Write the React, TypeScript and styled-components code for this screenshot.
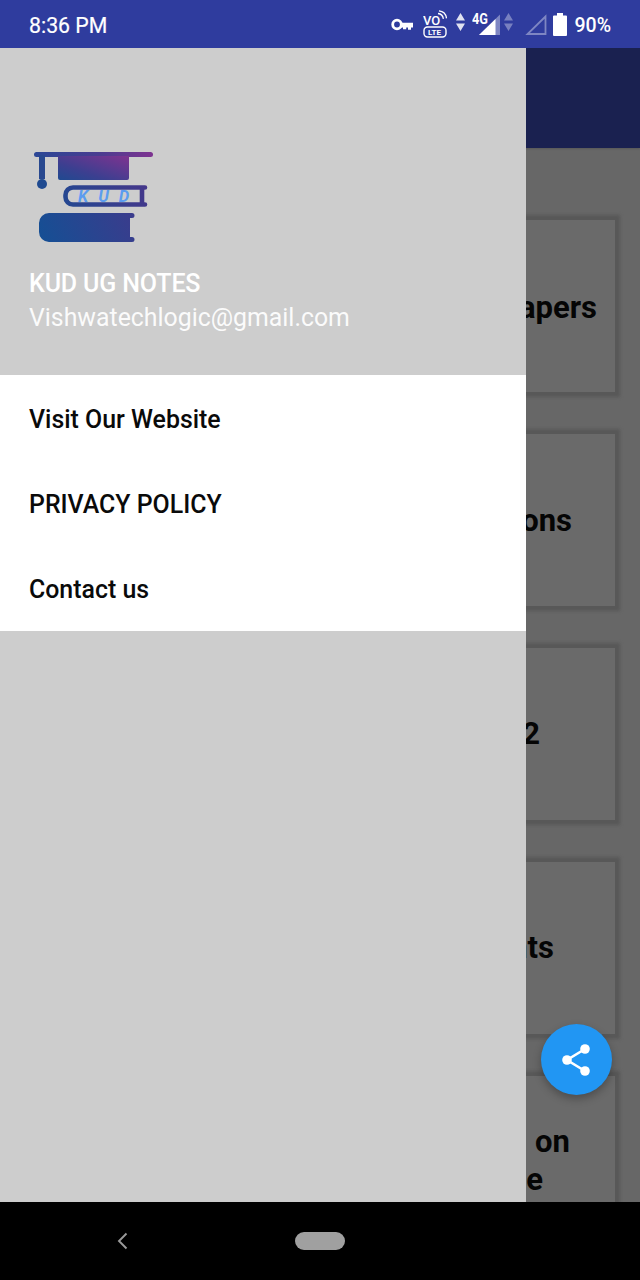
import React from "react";
import styled, { createGlobalStyle } from "styled-components";

const Global = createGlobalStyle`
  html, body { margin: 0; padding: 0; background: #000; }
  body { font-family: Roboto, "Liberation Sans", sans-serif; }
`;

const Screen = styled.div`
  width: 640px;
  height: 1280px;
  display: flex;
  flex-direction: column;
  overflow: hidden;
`;

const StatusBar = styled.header`
  height: 48px;
  flex: none;
  background: #2f3c9e;
  color: #fff;
  display: flex;
  align-items: center;
  padding: 0 29px;
  font-size: 20px;
  font-weight: 500;
`;

const Time = styled.span`
  flex: 1;
  font-size: 21.3px;
  font-weight: 400;
  padding-top: 2px;
  -webkit-text-stroke: 0.2px #fff;
`;

const StatusIcons = styled.div`
  display: flex;
  align-items: center;
`;

const StatusIcon = styled.svg<{ $gap: number; $lift?: number }>`
  display: block;
  margin-right: ${(p) => p.$gap}px;
  margin-bottom: ${(p) => p.$lift ?? 0}px;
  flex: none;
`;

const Battery = styled.span`
  font-size: 19.5px;
  line-height: 1;
  padding-top: 3px;
`;

const Body = styled.main`
  flex: 1;
  position: relative;
  display: flex;
  flex-direction: column;
  background: #676767;
  overflow: hidden;
`;

const AppBar = styled.div`
  height: 100px;
  flex: none;
  background: #1a2150;
  box-shadow: 0 1px 2px rgba(0, 0, 0, 0.15);
`;

const CardList = styled.div`
  display: flex;
  flex-direction: column;
  gap: 42px;
  padding: 72px 25px 0 25px;
`;

const Card = styled.section<{ $down?: number; $up?: number }>`
  height: 172px;
  flex: none;
  box-sizing: border-box;
  padding-top: ${(p) => p.$down ?? 0}px;
  padding-bottom: ${(p) => p.$up ?? 0}px;
  background: #6a6a6a;
  box-shadow: 0 0 3px 5px #585858;
  display: flex;
  flex-direction: column;
  justify-content: center;
  align-items: flex-end;
  font-size: 31px;
  font-weight: 700;
  word-spacing: 1px;
  color: #050505;
`;

const CardLine = styled.div<{ $end: number }>`
  margin-right: ${(p) => p.$end}px;
  white-space: nowrap;
  line-height: 38px;
`;

const Drawer = styled.aside`
  position: absolute;
  left: 0;
  top: 0;
  bottom: 0;
  width: 526px;
  background: #cdcdcd;
  display: flex;
  flex-direction: column;
`;

const DrawerHeader = styled.div`
  height: 327px;
  flex: none;
  box-sizing: border-box;
  padding: 104px 0 0 29px;
  color: #fff;
`;

const Logo = styled.svg`
  display: block;
  margin: 0 0 23px 5px;
`;

const HeaderTitle = styled.div`
  font-size: 25px;
  font-weight: 500;
  line-height: 34px;
  letter-spacing: -0.15px;
`;

const HeaderMail = styled.div`
  font-size: 24.85px;
  line-height: 34px;
  font-weight: 400;
  opacity: 0.92;
`;

const Menu = styled.nav`
  background: #fff;
  height: 256px;
  flex: none;
  display: grid;
  grid-template-rows: repeat(3, 1fr);
`;

const MenuItem = styled.div`
  display: flex;
  align-items: center;
  padding: 3px 0 0 29px;
  font-size: 24.9px;
  font-weight: 500;
  color: #0a0a0a;
`;

const Fab = styled.button`
  position: absolute;
  left: 540.5px;
  top: 976px;
  width: 71px;
  height: 71px;
  padding: 0;
  border: 0;
  border-radius: 50%;
  background: #2196f3;
  box-shadow: 0 4px 8px rgba(0, 0, 0, 0.28);
  display: flex;
  align-items: center;
  justify-content: center;
`;

const NavBar = styled.footer`
  height: 78px;
  flex: none;
  background: #000;
  display: flex;
  align-items: center;
  padding-left: 117px;
`;

const BackIcon = styled.svg`
  display: block;
  margin-right: 167px;
`;

const HomePill = styled.div`
  width: 50px;
  height: 18px;
  border-radius: 9px;
  background: #a0a0a0;
`;

const MiniText = styled.text`
  font-family: Roboto, "Liberation Sans", sans-serif;
  fill: #fff;
`;

const LogoLetters = styled.text`
  font-family: Roboto, "Liberation Sans", sans-serif;
  font-style: italic;
  font-weight: 700;
  font-size: 16.5px;
  letter-spacing: 10px;
  fill: #5b9cf0;
`;

const KeyIcon = () => (
  <StatusIcon $gap={10} width="22" height="13" viewBox="0 0 22 13" fill="none">
    <circle cx="6" cy="6.500" r="4.300" stroke="#fff" strokeWidth="2.800" />
    <path d="M10 4.800h12v4.600h-2v2.400h-3V9.400h-1.800v1.800H12V9.400h-2z" fill="#fff" />
  </StatusIcon>
);

const VolteIcon = () => (
  <StatusIcon $gap={9} width="24" height="28" viewBox="0 0 24 28" fill="none">
    <MiniText x="0" y="15" fontSize="13" fontWeight="500">VO</MiniText>
    <path d="M15 3.500c2.800.3 5 2.500 5.400 5.400M16 .8c4.200.4 7 3.400 7.500 7.600" stroke="#fff" strokeWidth="1.300" />
    <rect x="1" y="17" width="22" height="10" rx="3.500" stroke="#fff" strokeWidth="1.400" />
    <MiniText x="5" y="25" fontSize="8" fontWeight="700">LTE</MiniText>
  </StatusIcon>
);

const ArrowsIcon = ({ dim, gap }: { dim?: boolean; gap: number }) => (
  <StatusIcon $gap={gap} $lift={4} width="9" height="18" viewBox="0 0 9 18" opacity={dim ? 0.35 : 0.85}>
    <path d="M4.500 0L9 7.500H0zM0 10.500h9L4.500 18z" fill="#fff" />
  </StatusIcon>
);

const SignalIcon = () => (
  <StatusIcon $gap={2} $lift={6} width="30" height="30" viewBox="0 0 30 30">
    <MiniText x="0" y="18" fontSize="15" fontWeight="700" textLength="16" lengthAdjust="spacingAndGlyphs">4G</MiniText>
    <path d="M28 8.500V29H7z" fill="#fff" fillOpacity="0.38" />
    <path d="M23.500 13V29H7z" fill="#fff" />
  </StatusIcon>
);

const EmptySignalIcon = () => (
  <StatusIcon $gap={6} width="22" height="21" viewBox="0 0 22 21" fill="none">
    <path d="M20.500 2.500V20H2.500z" stroke="#fff" strokeOpacity="0.38" strokeWidth="1.800" />
  </StatusIcon>
);

const BatteryIcon = () => (
  <StatusIcon $gap={7} width="14" height="23" viewBox="0 0 14 23">
    <path d="M4 0h6v2.500h3a1 1 0 011 1V22a1 1 0 01-1 1H1a1 1 0 01-1-1V3.500a1 1 0 011-1h3z" fill="#fff" />
  </StatusIcon>
);

const LogoMark = () => (
  <Logo width="120" height="92" viewBox="0 0 120 92" fill="none">
    <defs>
      <linearGradient id="capGrad" x1="0" y1="1" x2="1" y2="0">
        <stop offset="0" stopColor="#1f4a90" />
        <stop offset="0.35" stopColor="#3c3f90" />
        <stop offset="1" stopColor="#7f3390" />
      </linearGradient>
      <linearGradient id="bookGrad" gradientUnits="userSpaceOnUse" x1="5" y1="85" x2="115" y2="30">
        <stop offset="0" stopColor="#154f94" />
        <stop offset="1" stopColor="#46368a" />
      </linearGradient>
      <linearGradient id="barGrad" gradientUnits="userSpaceOnUse" x1="0" y1="0" x2="120" y2="0">
        <stop offset="0" stopColor="#2b4796" />
        <stop offset="0.55" stopColor="#4a3c90" />
        <stop offset="1" stopColor="#7f3390" />
      </linearGradient>
    </defs>
    <rect x="0" y="0" width="119" height="5" rx="2.500" fill="url(#barGrad)" />
    <path d="M24 4h71v22a2 2 0 01-2 2H26a2 2 0 01-2-2z" fill="url(#capGrad)" />
    <rect x="5" y="3" width="6" height="24" fill="#28488f" />
    <circle cx="8" cy="32" r="5" fill="#1f4a90" />
    <path d="M111 35.500H39a7.500 7.500 0 00-7.500 7.500v2a7.500 7.500 0 007.500 7.500h72M108 36v16" stroke="url(#bookGrad)" strokeWidth="4.600" strokeLinecap="round" />
    <LogoLetters x="44" y="50">KUD</LogoLetters>
    <path d="M15 61h83a2.500 2.500 0 010 5h-2v19h2a2.500 2.500 0 010 5H15a10 10 0 01-10-10V71a10 10 0 0110-10z" fill="url(#bookGrad)" />
  </Logo>
);

export default function App() {
  return (
    <Screen>
      <Global />
      <StatusBar>
        <Time>8:36 PM</Time>
        <StatusIcons>
          <KeyIcon />
          <VolteIcon />
          <ArrowsIcon gap={7} />
          <SignalIcon />
          <ArrowsIcon dim gap={12} />
          <EmptySignalIcon />
          <BatteryIcon />
          <Battery>90%</Battery>
        </StatusIcons>
      </StatusBar>
      <Body>
        <AppBar />
        <CardList>
          <Card $down={4}><CardLine $end={18}>Exam Papers</CardLine></Card>
          <Card $down={2}><CardLine $end={43}>Solutions</CardLine></Card>
          <Card><CardLine $end={75}>Semester 2</CardLine></Card>
          <Card><CardLine $end={61}>Assignments</CardLine></Card>
          <Card $up={2}>
            <CardLine $end={45}>Notifications on</CardLine>
            <CardLine $end={72}>Exam Schedule</CardLine>
          </Card>
        </CardList>
        <Drawer>
          <DrawerHeader>
            <LogoMark />
            <HeaderTitle>KUD UG NOTES</HeaderTitle>
            <HeaderMail>Vishwatechlogic@gmail.com</HeaderMail>
          </DrawerHeader>
          <Menu>
            <MenuItem>Visit Our Website</MenuItem>
            <MenuItem>PRIVACY POLICY</MenuItem>
            <MenuItem>Contact us</MenuItem>
          </Menu>
        </Drawer>
        <Fab aria-label="Share">
          <svg width="30" height="32" viewBox="0 0 30 32" fill="none">
            <path d="M24 5L6 16l18 11" stroke="#fff" strokeWidth="2.600" />
            <circle cx="24" cy="5" r="4.800" fill="#fff" />
            <circle cx="6" cy="16" r="4.800" fill="#fff" />
            <circle cx="24" cy="27" r="4.800" fill="#fff" />
          </svg>
        </Fab>
      </Body>
      <NavBar>
        <BackIcon width="11" height="18" viewBox="0 0 11 18" fill="none">
          <path d="M9.500 1.500L2 9l7.500 7.500" stroke="#9a9a9a" strokeWidth="1.900" />
        </BackIcon>
        <HomePill />
      </NavBar>
    </Screen>
  );
}
